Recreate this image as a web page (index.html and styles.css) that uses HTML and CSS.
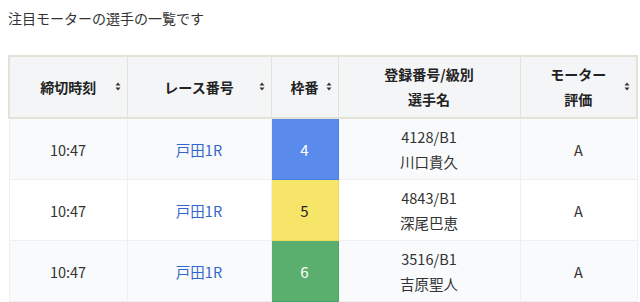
FILE: index.html
```html
<!DOCTYPE html>
<html lang="ja">
<head>
<meta charset="utf-8">
<link rel="stylesheet" href="styles.css">
</head>
<body>
<p class="lead">注目モーターの選手の一覧です</p>
<table class="motor-table">
  <colgroup>
    <col class="c1"><col class="c2"><col class="c3"><col class="c4"><col class="c5">
  </colgroup>
  <thead>
    <tr>
      <th class="sortable">締切時刻<span class="sort"><svg viewBox="0 0 6 9" width="6" height="9"><path d="M3 0.5L5.5 3.5H0.5Z M3 8.5L0.5 5.5H5.5Z" fill="#333"/></svg></span></th>
      <th class="sortable">レース番号<span class="sort"><svg viewBox="0 0 6 9" width="6" height="9"><path d="M3 0.5L5.5 3.5H0.5Z M3 8.5L0.5 5.5H5.5Z" fill="#333"/></svg></span></th>
      <th class="sortable">枠番<span class="sort"><svg viewBox="0 0 6 9" width="6" height="9"><path d="M3 0.5L5.5 3.5H0.5Z M3 8.5L0.5 5.5H5.5Z" fill="#333"/></svg></span></th>
      <th>登録番号/級別<br>選手名</th>
      <th class="sortable">モーター<br>評価<span class="sort"><svg viewBox="0 0 6 9" width="6" height="9"><path d="M3 0.5L5.5 3.5H0.5Z M3 8.5L0.5 5.5H5.5Z" fill="#333"/></svg></span></th>
    </tr>
  </thead>
  <tbody>
    <tr>
      <td>10:47</td>
      <td><a class="race" href="#">戸田1R</a></td>
      <td class="frame f4">4</td>
      <td>4128/B1<br>川口貴久</td>
      <td>A</td>
    </tr>
    <tr>
      <td>10:47</td>
      <td><a class="race" href="#">戸田1R</a></td>
      <td class="frame f5">5</td>
      <td>4843/B1<br>深尾巴恵</td>
      <td>A</td>
    </tr>
    <tr>
      <td>10:47</td>
      <td><a class="race" href="#">戸田1R</a></td>
      <td class="frame f6">6</td>
      <td>3516/B1<br>吉原聖人</td>
      <td>A</td>
    </tr>
  </tbody>
</table>
</body>
</html>
```
FILE: styles.css
```css
html, body {
  margin: 0;
  padding: 0;
  background: #fff;
}
body {
  padding: 8px;
  font-family: "Noto Sans CJK JP", "Noto Sans", sans-serif;
  color: #333;
  font-size: 14px;
}
.lead {
  margin: 0 0 27px;
  line-height: 20px;
  font-size: 14px;
  color: #333;
}
.motor-table {
  border-collapse: collapse;
  table-layout: fixed;
  width: 628px;
}
.c1 { width: 118px; }
.c2 { width: 144px; }
.c3 { width: 67px; }
.c4 { width: 182px; }
.c5 { width: 117px; }
.motor-table th {
  position: relative;
  background: #f4f5f7;
  border: 1px solid #e4e1d6;
  border-top-width: 2px;
  border-bottom-width: 2px;
  font-weight: bold;
  color: #222;
  font-size: 14px;
  line-height: 25px;
  height: 50px;
  padding: 5px 4px;
  text-align: center;
  vertical-align: middle;
}
.motor-table th:first-child { border-left-width: 2px; }
.motor-table th:last-child { border-right-width: 2px; }
.sort {
  position: absolute;
  right: 6px;
  top: 50%;
  margin-top: -5px;
  display: flex;
  line-height: 0;
}
.motor-table td {
  border: 1px solid #eeeff1;
  line-height: 25px;
  height: 50px;
  padding: 5px 4px;
  text-align: center;
  vertical-align: middle;
  color: #333;
  font-size: 14.5px;
}
.motor-table tbody tr:nth-child(odd) td { background: #f9fafb; }
.motor-table tbody tr:nth-child(even) td { background: #fff; }
.race {
  color: #3366cc;
  text-decoration: none;
}
.motor-table tbody tr td.frame { color: #fff; font-size: 15px; }
.motor-table tbody tr td.f4 { background: #5a8bec; border: 1px solid #4b7fe4; }
.motor-table tbody tr td.f5 { background: #f7e56a; border: 1px solid #eedb5a; color: #222; }
.motor-table tbody tr td.f6 { background: #5aaf6f; border: 1px solid #4aa662; }
```
